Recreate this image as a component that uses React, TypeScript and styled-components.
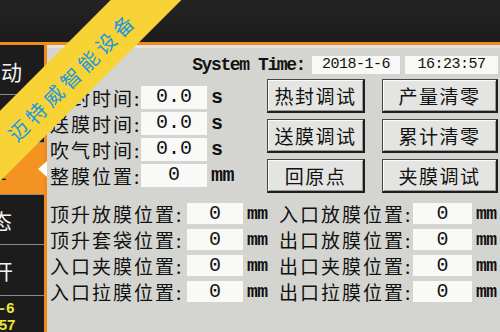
import React from 'react'
import styled, { createGlobalStyle } from 'styled-components'

const CJK = `"Noto Sans CJK SC", "Noto Sans", sans-serif`
const MONO = `"Liberation Mono", "DejaVu Sans Mono", monospace`

const GlobalStyle = createGlobalStyle`
  html, body {
    margin: 0;
    padding: 0;
    background: #d4d5d0;
  }
  body {
    width: 500px;
    height: 332px;
    overflow: hidden;
  }
`

const menu = [
  { text: '手动', shift: -21, h: 48 },
  { text: '自动', shift: -21, h: 48 },
  { text: '参数设置', shift: -80, h: 52, active: true },
  { text: '状态', shift: -31, h: 50 },
  { text: '打开', shift: -30, h: 51 }
]

const timers = [
  { label: '热封时间', value: '0.0', unit: 's' },
  { label: '送膜时间', value: '0.0', unit: 's' },
  { label: '吹气时间', value: '0.0', unit: 's' },
  { label: '整膜位置', value: '0', unit: 'mm' }
]

const actions = ['热封调试', '产量清零', '送膜调试', '累计清零', '回原点', '夹膜调试']

const positions = [
  ['顶升放膜位置', '入口放膜位置'],
  ['顶升套袋位置', '出口放膜位置'],
  ['入口夹膜位置', '出口夹膜位置'],
  ['入口拉膜位置', '出口拉膜位置']
]

const App = () => {
  return (
    <>
      <GlobalStyle />
      <Screen>
        <TopBar />
        <Body>
          <Sidebar>
            {menu.map((m) => (
              <MenuItem key={m.text} $h={m.h} $active={!!m.active}>
                <MenuText $shift={m.shift}>{m.text}</MenuText>
              </MenuItem>
            ))}
            <Clock>
              <ClockLine $shift={-53}>2018-1-6</ClockLine>
              <ClockLine $shift={-52}>16:23:57</ClockLine>
            </Clock>
          </Sidebar>

          <Content>
            <TimeRow>
              <TimeLabel>System Time:</TimeLabel>
              <TimeBox $w={88}>2018-1-6</TimeBox>
              <TimeBox $w={93}>16:23:57</TimeBox>
            </TimeRow>

            <Middle>
              <Fields>
                {timers.map((t) => (
                  <FieldRow key={t.label}>
                    <Label>{t.label}:</Label>
                    <ValueBox>{t.value}</ValueBox>
                    <Unit $size={20}>{t.unit}</Unit>
                  </FieldRow>
                ))}
              </Fields>
              <ButtonGrid>
                {actions.map((a) => (
                  <ActionButton key={a}>{a}</ActionButton>
                ))}
              </ButtonGrid>
            </Middle>

            <PositionGrid>
              {positions.map(([left, right]) => (
                <React.Fragment key={left}>
                  <Label>{left}:</Label>
                  <ValueBox>0</ValueBox>
                  <Unit $size={18}>mm</Unit>
                  <Label>{right}:</Label>
                  <ValueBox>0</ValueBox>
                  <Unit $size={18}>mm</Unit>
                </React.Fragment>
              ))}
            </PositionGrid>
          </Content>
        </Body>

        <Ribbon>
          <RibbonText>迈特威智能设备</RibbonText>
        </Ribbon>
      </Screen>
    </>
  )
}

const Screen = styled.div`
  position: relative;
  width: 500px;
  height: 332px;
  overflow: hidden;
  display: flex;
  flex-direction: column;
  background: #d4d5d0;
  font-family: ${CJK};
  color: #111;
`

const TopBar = styled.div`
  flex: none;
  height: 42px;
  background: linear-gradient(#232323, #1c1c1c);
  border-bottom: 3px solid #ef8b1d;
`

const Body = styled.div`
  flex: 1;
  display: flex;
  min-height: 0;
`

const Sidebar = styled.div`
  flex: none;
  width: 44px;
  display: flex;
  flex-direction: column;
  padding-top: 2px;
  background: #1c1c1c;
  border-right: 3px solid #ef8b1d;
`

const MenuItem = styled.div<{ $h: number; $active: boolean }>`
  position: relative;
  flex: none;
  height: ${(p) => p.$h}px;
  display: flex;
  align-items: center;
  box-sizing: border-box;
  border-bottom: 1px solid #8a8a8a;
  background: ${(p) => (p.$active ? '#f39322' : '#1c1c1c')};
  color: ${(p) => (p.$active ? '#1a1a1a' : '#f2f2f2')};

  &::after {
    content: '';
    display: ${(p) => (p.$active ? 'block' : 'none')};
    position: absolute;
    right: -3px;
    top: 50%;
    transform: translateY(-50%);
    border-top: 8px solid transparent;
    border-bottom: 8px solid transparent;
    border-right: 9px solid #ffffff;
  }
`

const MenuText = styled.span<{ $shift: number }>`
  margin-left: ${(p) => p.$shift}px;
  font-size: 21px;
  white-space: nowrap;
  letter-spacing: 1px;
`

const Clock = styled.div`
  display: flex;
  flex-direction: column;
  padding-top: 5px;
  color: #ece43c;
  font-family: ${MONO};
  font-weight: bold;
  font-size: 15px;
  line-height: 17px;
`

const ClockLine = styled.span<{ $shift: number }>`
  margin-left: ${(p) => p.$shift}px;
  white-space: nowrap;
  letter-spacing: -0.6px;
`

const Content = styled.div`
  flex: 1;
  display: flex;
  flex-direction: column;
  border-top: 3px solid #e3e3e0;
  padding: 8px 2px 0 2px;
`

const TimeRow = styled.div`
  display: flex;
  justify-content: flex-end;
  align-items: center;
  gap: 5px;
  height: 18px;
`

const TimeLabel = styled.span`
  font-family: ${MONO};
  font-weight: bold;
  font-size: 18px;
  letter-spacing: -1.4px;
  margin-right: 2px;
`

const TimeBox = styled.div<{ $w: number }>`
  width: ${(p) => p.$w}px;
  height: 18px;
  background: #f8f8f6;
  font-family: ${MONO};
  font-size: 15px;
  line-height: 18px;
  text-align: center;
  letter-spacing: -0.5px;
`

const Middle = styled.div`
  display: flex;
  margin-top: 5px;
`

const Fields = styled.div`
  width: 218px;
  display: flex;
  flex-direction: column;
  gap: 4px;
  padding-top: 7px;
`

const FieldRow = styled.div`
  display: grid;
  grid-template-columns: 92px 66px auto;
  align-items: center;
  height: 22px;
`

const Label = styled.span`
  font-size: 19px;
  letter-spacing: 2px;
  white-space: nowrap;
  line-height: 22px;
  padding-left: 1px;
`

const ValueBox = styled.div`
  height: 100%;
  background: #f9f9f7;
  font-family: ${MONO};
  font-size: 20px;
  line-height: 22px;
  text-align: center;
`

const Unit = styled.span<{ $size: number }>`
  padding-left: 4px;
  font-family: ${MONO};
  font-weight: bold;
  font-size: ${(p) => p.$size}px;
  letter-spacing: -0.5px;
`

const ButtonGrid = styled.div`
  display: grid;
  grid-template-columns: 98px 116px;
  grid-auto-rows: 34px;
  column-gap: 17px;
  row-gap: 6px;
`

const ActionButton = styled.button`
  box-sizing: border-box;
  margin: 0;
  padding: 0;
  background: #e4e4e2;
  border-style: solid;
  border-width: 1px 2px 2px 1px;
  border-color: #444 #1e1e1e #1e1e1e #444;
  box-shadow: inset 1px 1px 0 #fbfbfb, inset -1px -1px 0 #9a9a98;
  font-family: ${CJK};
  font-size: 19px;
  letter-spacing: 1.5px;
  color: #111;
`

const PositionGrid = styled.div`
  display: grid;
  grid-template-columns: 138px 56px 35px 135px 59px auto;
  grid-auto-rows: 21px;
  row-gap: 5px;
  align-items: center;
  margin-top: 10px;

  ${ValueBox} {
    line-height: 21px;
  }
`

const Ribbon = styled.div`
  position: absolute;
  left: -97px;
  top: 48px;
  width: 340px;
  height: 50px;
  transform: rotate(-45deg);
  background: #f8d335;
  display: flex;
  justify-content: center;
  align-items: center;
`

const RibbonText = styled.span`
  margin-top: 3px;
  margin-left: -6px;
  color: #1b98e0;
  font-size: 20px;
  letter-spacing: 4.6px;
  white-space: nowrap;
`

export default App
